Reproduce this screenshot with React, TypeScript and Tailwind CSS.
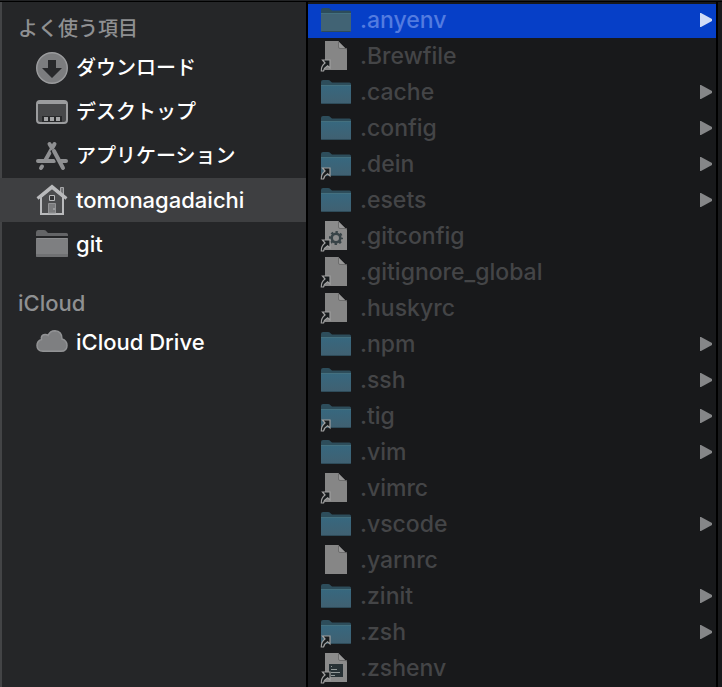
import type { ReactNode } from "react";

type Kind = "folder" | "file" | "gear" | "shell";

interface Entry {
  name: string;
  kind: Kind;
  alias?: boolean;
  children?: boolean;
  selected?: boolean;
}

const entries: Entry[] = [
  { name: ".anyenv", kind: "folder", children: true, selected: true },
  { name: ".Brewfile", kind: "file", alias: true },
  { name: ".cache", kind: "folder", children: true },
  { name: ".config", kind: "folder", children: true },
  { name: ".dein", kind: "folder", alias: true, children: true },
  { name: ".esets", kind: "folder", children: true },
  { name: ".gitconfig", kind: "gear", alias: true },
  { name: ".gitignore_global", kind: "file", alias: true },
  { name: ".huskyrc", kind: "file", alias: true },
  { name: ".npm", kind: "folder", children: true },
  { name: ".ssh", kind: "folder", children: true },
  { name: ".tig", kind: "folder", alias: true, children: true },
  { name: ".vim", kind: "folder", children: true },
  { name: ".vimrc", kind: "file", alias: true },
  { name: ".vscode", kind: "folder", children: true },
  { name: ".yarnrc", kind: "file" },
  { name: ".zinit", kind: "folder", children: true },
  { name: ".zsh", kind: "folder", alias: true, children: true },
  { name: ".zshenv", kind: "shell", alias: true },
];

function EntryIcon({ kind, alias, selected }: Entry) {
  return (
    <svg width="32" height="32" viewBox="0 0 32 32" aria-hidden="true" className="shrink-0">
      <defs>
        <linearGradient id="folderFront" x1="0" y1="0" x2="0" y2="1">
          <stop offset="0" stopColor="#37687f" />
          <stop offset="1" stopColor="#406071" />
        </linearGradient>
      </defs>
      {kind === "folder" ? (
        <g>
          <path d="M1 6Q1 4 3 4H8Q9.500 4 10.500 5.200L12 6.500H29.500Q31 6.500 31 8V12H1Z" fill="#2d4d5b" />
          <path d="M1 9H31V26.500Q31 28 29.500 28H2.500Q1 28 1 26.500Z" fill={selected ? "#416374" : "url(#folderFront)"} />
          <path d="M1 9.500H31" stroke="#44707f" />
          <path d="M1.500 27.500H30.500" stroke="#2e4b59" />
        </g>
      ) : (
        <g>
          <path d="M5 1H18L27 10V30H5Z" fill={kind === "file" ? "#868686" : "#8b8b8b"} />
          <path d="M18 1L27 10V8.500Q26 8 22 8H19.500Q18.500 8 18.500 6.500Z" fill="#989898" />
          <path d="M18.500 2V7Q18.500 8.500 20 8.500H25" fill="none" stroke="#6d6d6d" />
        </g>
      )}
      {kind === "gear" && (
        <g fill="none" stroke="#384347">
          <circle cx="16" cy="18" r="4.300" strokeWidth="2.600" />
          <circle cx="16" cy="18" r="6" strokeWidth="2" strokeDasharray="2.400 2.312" strokeDashoffset="1.200" />
        </g>
      )}
      {kind === "shell" && (
        <g>
          <path d="M9 12H23V25H9Z" fill="#283236" />
          <path d="M11 14.500H12M11 17.500H17M11 20.500H20M11 23.500H15" stroke="#929999" />
        </g>
      )}
      {alias && (
        <path
          d="M2.500 20H10V28L7.600 25.800Q4.500 27.500 3.500 31H1.300Q1 26 5 23Z"
          fill="#171b1d"
          stroke="#a0a0a0"
          strokeWidth="1.200"
        />
      )}
    </svg>
  );
}

function DownloadIcon() {
  return (
    <svg width="32" height="32" viewBox="0 0 32 32" aria-hidden="true">
      <circle cx="16" cy="16" r="15.300" fill="#7c7d7f" stroke="#9b9c9e" strokeWidth="1.400" />
      <path d="M12 8H20V16H26L16 26L6 16H12Z" fill="#28292b" />
    </svg>
  );
}

function DesktopIcon() {
  return (
    <svg width="32" height="32" viewBox="0 0 32 32" aria-hidden="true">
      <rect x="1" y="5" width="30" height="22" rx="3" fill="#47484a" stroke="#9b9c9e" strokeWidth="2" />
      <path d="M1 8V7Q1 5 3 5H29Q31 5 31 7V8Z" fill="#9b9c9e" />
      <path d="M6 20H26V26H6Z" fill="#28292b" />
      <path d="M8 21H12V25H8ZM14 21H18V25H14ZM20 21H24V25H20Z" fill="#a3a4a6" />
    </svg>
  );
}

function ApplicationsIcon() {
  return (
    <svg width="32" height="32" viewBox="0 0 32 32" aria-hidden="true">
      <g fill="none" stroke="#8f9092" strokeWidth="4" strokeLinecap="round">
        <path d="M2 21H18M25 21H30" />
        <path d="M18.500 4L9.500 20M6 26.500L5 28" />
      </g>
      <path d="M16 10L25 27" stroke="#252628" strokeWidth="4" />
      <path d="M13.500 4L15 6.500M18 11L27 28" stroke="#8f9092" strokeWidth="4" strokeLinecap="round" />
    </svg>
  );
}

function HomeIcon() {
  return (
    <svg width="32" height="32" viewBox="0 0 32 32" aria-hidden="true">
      <path d="M24.500 12V3.500H27.500V14" fill="#727375" stroke="#a6a7a9" />
      <path d="M5 13L16 4L27 13V30H5Z" fill="#4b4c4e" stroke="#b9babc" strokeWidth="2" />
      <path d="M1.500 14.500L16 2.500L30.500 14.500" fill="none" stroke="#b9babc" strokeWidth="3" />
      <path d="M13.500 11.500H18.500V16.500H13.500Z" fill="#333436" stroke="#b9babc" />
      <path d="M12.500 19.500H19.500V29H12.500Z" fill="#7b7c7e" stroke="#929395" />
      <path d="M18 24V26" stroke="#b9babc" />
    </svg>
  );
}

function SideFolderIcon() {
  return (
    <svg width="32" height="32" viewBox="0 0 32 32" aria-hidden="true">
      <path d="M0 8V4.500Q0 2 2 2H8Q10 2 11 4L12 5H30.500Q32 5 32 6.500V8Z" fill="#646567" />
      <path d="M0 11Q0 10 1 10H31Q32 10 32 11V27.500Q32 29 30.500 29H1.500Q0 29 0 27.500Z" fill="#7e7f81" />
      <path d="M0.500 10.500H31.500" stroke="#8d8e90" />
      <path d="M0 26H32V27.500Q32 29 30.500 29H1.500Q0 29 0 27.500Z" fill="#707173" />
    </svg>
  );
}

function CloudIcon() {
  return (
    <svg width="32" height="32" viewBox="0 0 32 32" aria-hidden="true">
      <path
        d="M7 25.300Q1 25 1 19.500Q1 15 5.500 13.500Q4.500 9 9 8.500Q10.500 8.300 12 9.500Q14 4.700 19 4.700Q26 5 26 13Q31 14.500 31 19.500Q31 25.300 25 25.300Z"
        fill="#7e7f81"
        stroke="#929395"
        strokeWidth="1.500"
      />
    </svg>
  );
}

interface PlaceProps {
  icon: ReactNode;
  children: ReactNode;
  selected?: boolean;
  kana?: boolean;
}

function Place({ icon, children, selected, kana }: PlaceProps) {
  return (
    <li>
      <button
        type="button"
        aria-current={selected ? "page" : undefined}
        className={`flex h-11 w-full items-center gap-2 pl-9 text-left font-medium text-white ${
          selected ? "bg-[#3e3f41]" : ""
        } ${kana ? "text-[20px]" : "text-[22px]"}`}
      >
        {icon}
        <span className="whitespace-nowrap">{children}</span>
      </button>
    </li>
  );
}

export default function App() {
  return (
    <div className="flex min-h-screen flex-col bg-black font-[Inter,'Noto_Sans_CJK_JP',sans-serif]">
      <div className="h-px bg-[#222325]" />
      <div className="mt-px flex flex-1">
        <nav
          aria-label="Places"
          className="w-[306px] shrink-0 bg-[#252628] pt-2.5 leading-8 shadow-[inset_2px_0_0_#434446]"
        >
          <h2 className="flex h-[34px] items-center pl-[18px] text-[20px] font-medium text-[#8f9092]">よく使う項目</h2>
          <ul>
            <Place icon={<DownloadIcon />} kana>
              ダウンロード
            </Place>
            <Place icon={<DesktopIcon />} kana>
              デスクトップ
            </Place>
            <Place icon={<ApplicationsIcon />} kana>
              アプリケーション
            </Place>
            <Place icon={<HomeIcon />} selected>
              tomonagadaichi
            </Place>
            <Place icon={<SideFolderIcon />}>git</Place>
          </ul>
          <h2 className="mt-5 flex h-[34px] items-center pl-[18px] text-[22px] font-medium text-[#8f9092]">iCloud</h2>
          <ul>
            <Place icon={<CloudIcon />}>iCloud Drive</Place>
          </ul>
        </nav>
        <main className="ml-0.5 min-w-0 flex-1 bg-[#18191b]">
          <ul>
            {entries.map((entry) => (
              <li key={entry.name} className="pt-0.5">
                <button
                  type="button"
                  className={`flex h-[34px] w-full items-center pr-1 pb-0.5 pl-3 text-left text-[23px] leading-8 font-medium ${
                    entry.selected ? "bg-[#063fc7] text-[#527be0]" : "text-[#444547]"
                  }`}
                >
                  <EntryIcon {...entry} />
                  <span className="ml-2 flex-1">{entry.name}</span>
                  {entry.children && (
                    <svg
                      width="12"
                      height="14"
                      viewBox="0 0 12 14"
                      aria-hidden="true"
                      className={entry.selected ? "text-[#d1dcf6]" : "text-[#858688]"}
                    >
                      <path d="M0 0H1L12 6V8L1 14H0Z" fill="currentColor" />
                    </svg>
                  )}
                </button>
              </li>
            ))}
          </ul>
        </main>
        <div className="ml-0.5 w-1 bg-[#18191b]" />
      </div>
    </div>
  );
}
